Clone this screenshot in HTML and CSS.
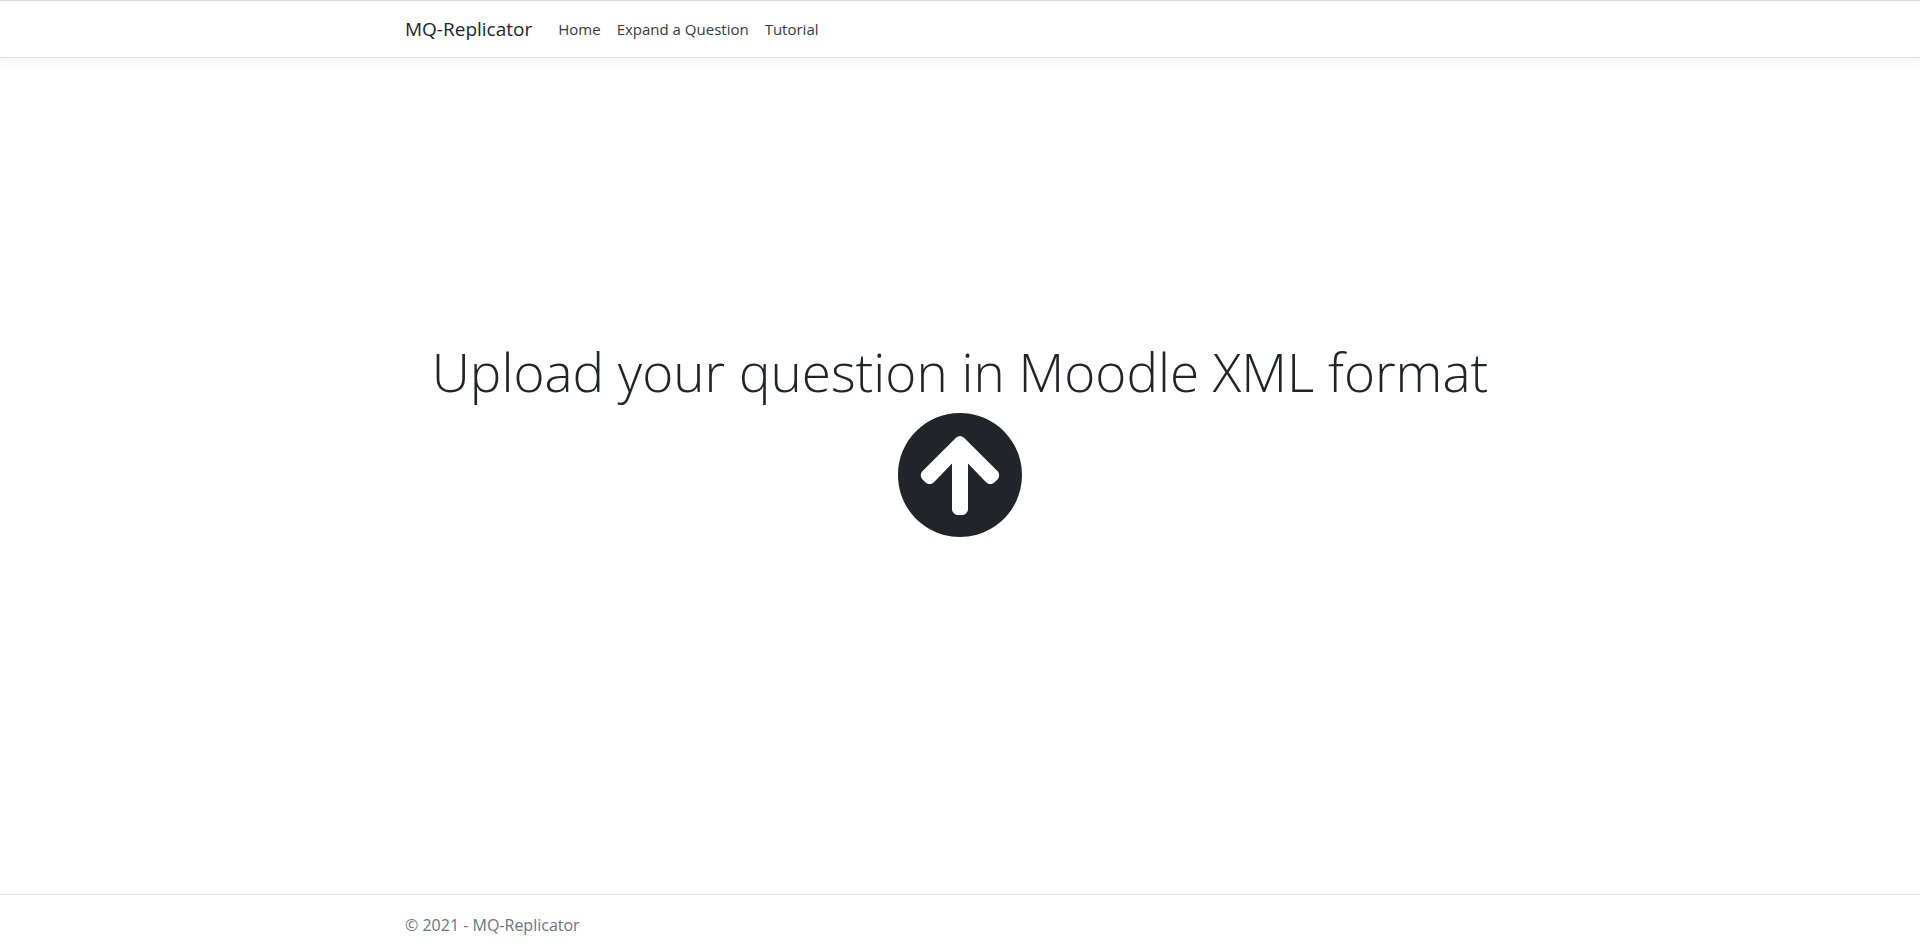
FILE: index.html
```html
<!DOCTYPE html>
<html lang="en">
<head>
<meta charset="utf-8">
<meta name="viewport" content="width=device-width, initial-scale=1">
<title>MQ-Replicator</title>
<link rel="stylesheet" href="styles.css">
</head>
<body>
<header class="site-header">
  <nav class="container navbar">
    <a class="brand" href="#">MQ-Replicator</a>
    <ul class="nav-list">
      <li><a class="nav-link" href="#">Home</a></li>
      <li><a class="nav-link" href="#">Expand a Question</a></li>
      <li><a class="nav-link" href="#">Tutorial</a></li>
    </ul>
  </nav>
</header>
<main class="container upload">
  <h1 class="title">Upload your question in Moodle XML format</h1>
  <button class="upload-button" type="button" aria-label="Upload">
    <svg class="upload-icon" viewBox="0 0 512 512" aria-hidden="true"><path fill="currentColor" d="M8 256C8 119 119 8 256 8s248 111 248 248-111 248-248 248S8 393 8 256zm143.6 28.9l72.4-75.4V392c0 13.3 10.7 24 24 24h16c13.3 0 24-10.7 24-24V209.5l72.4 75.4c9.3 9.7 24.8 9.9 34.3.4l10.9-11c9.4-9.4 9.4-24.6 0-33.9L273 107.7c-9.4-9.4-24.6-9.4-33.9 0L106.3 240.4c-9.4 9.4-9.4 24.6 0 33.9l10.9 11c9.6 9.5 25.1 9.3 34.4-.4z"/></svg>
  </button>
</main>
<footer class="site-footer">
  <div class="container">© 2021 - MQ-Replicator</div>
</footer>
</body>
</html>
```
FILE: styles.css
```css
* {
  box-sizing: border-box;
}

body {
  display: flex;
  flex-direction: column;
  min-height: 100vh;
  margin: 0;
  background: #fff;
  color: #212529;
  font-family: "Segoe UI", "Open Sans", "Noto Sans", sans-serif;
  font-size: 16px;
  line-height: 24px;
}

.container {
  width: 100%;
  max-width: 1140px;
  margin: 0 auto;
  padding: 0 15px;
}

.site-header {
  border-top: 1px solid #d8d9dd;
  border-bottom: 1px solid #dee2e6;
  box-shadow: 0 4px 12px rgba(0, 0, 0, 0.05);
}

.navbar {
  display: flex;
  align-items: center;
  gap: 18px;
  min-height: 56px;
}

.brand {
  color: #212529;
  font-size: 19px;
  line-height: 30px;
  text-decoration: none;
}

.nav-list {
  display: flex;
  margin: 0;
  padding: 0;
  list-style: none;
}

.nav-link {
  display: block;
  padding: 8px;
  color: #343a40;
  font-size: 15px;
  text-decoration: none;
}

.upload {
  display: flex;
  flex: 1;
  flex-direction: column;
  align-items: center;
  justify-content: center;
  padding-bottom: 77px;
}

.title {
  margin: 0 0 4px;
  font-size: 53px;
  font-weight: 300;
  line-height: 71px;
  text-align: center;
}

.upload-button {
  padding: 0;
  border: 0;
  background: none;
  color: #212529;
  cursor: pointer;
}

.upload-icon {
  display: block;
  width: 128px;
  height: 128px;
}

.site-footer {
  padding: 18px 0 15px;
  border-top: 1px solid #dee2e6;
  color: #6c757d;
}
```
